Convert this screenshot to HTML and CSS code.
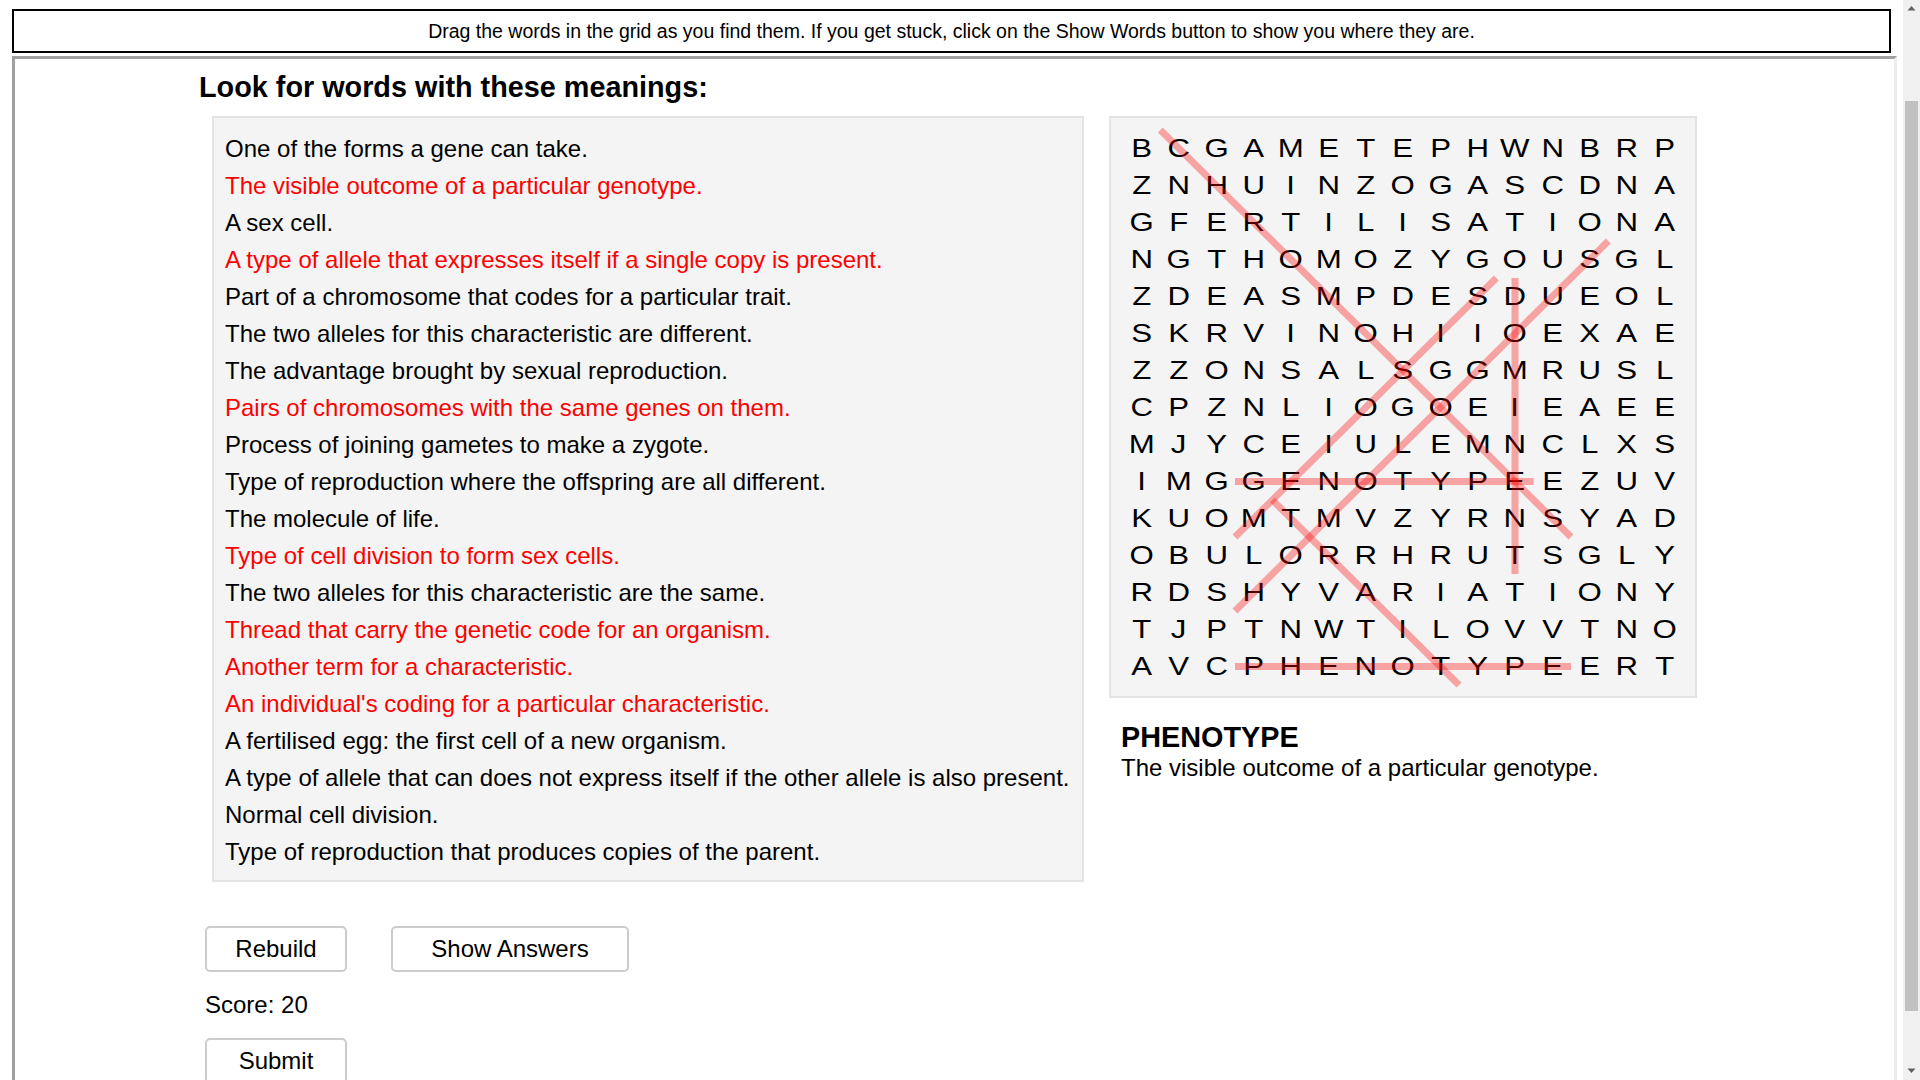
FILE: index.html
```html
<!DOCTYPE html>
<html lang="en">
<head>
<meta charset="utf-8">
<title>Word Search</title>
<link rel="stylesheet" href="styles.css">
</head>
<body>
<div class="page">
  <div class="topbar">Drag the words in the grid as you find them. If you get stuck, click on the Show Words button to show you where they are.</div>
  <div class="frame">
    <div class="wrap">
      <h2 class="title">Look for words with these meanings:</h2>
      <div class="columns">
        <div class="defs">
          <div class="def">One of the forms a gene can take.</div>
          <div class="def found">The visible outcome of a particular genotype.</div>
          <div class="def">A sex cell.</div>
          <div class="def found">A type of allele that expresses itself if a single copy is present.</div>
          <div class="def">Part of a chromosome that codes for a particular trait.</div>
          <div class="def">The two alleles for this characteristic are different.</div>
          <div class="def">The advantage brought by sexual reproduction.</div>
          <div class="def found">Pairs of chromosomes with the same genes on them.</div>
          <div class="def">Process of joining gametes to make a zygote.</div>
          <div class="def">Type of reproduction where the offspring are all different.</div>
          <div class="def">The molecule of life.</div>
          <div class="def found">Type of cell division to form sex cells.</div>
          <div class="def">The two alleles for this characteristic are the same.</div>
          <div class="def found">Thread that carry the genetic code for an organism.</div>
          <div class="def found">Another term for a characteristic.</div>
          <div class="def found">An individual's coding for a particular characteristic.</div>
          <div class="def">A fertilised egg: the first cell of a new organism.</div>
          <div class="def">A type of allele that can does not express itself if the other allele is also present.</div>
          <div class="def">Normal cell division.</div>
          <div class="def">Type of reproduction that produces copies of the parent.</div>
        </div>
        <div class="side">
          <div class="grid-panel">
            <div class="grid-wrap">
              <div class="grid">
                <span>B</span><span>C</span><span>G</span><span>A</span><span>M</span><span>E</span><span>T</span><span>E</span><span>P</span><span>H</span><span>W</span><span>N</span><span>B</span><span>R</span><span>P</span>
                <span>Z</span><span>N</span><span>H</span><span>U</span><span>I</span><span>N</span><span>Z</span><span>O</span><span>G</span><span>A</span><span>S</span><span>C</span><span>D</span><span>N</span><span>A</span>
                <span>G</span><span>F</span><span>E</span><span>R</span><span>T</span><span>I</span><span>L</span><span>I</span><span>S</span><span>A</span><span>T</span><span>I</span><span>O</span><span>N</span><span>A</span>
                <span>N</span><span>G</span><span>T</span><span>H</span><span>O</span><span>M</span><span>O</span><span>Z</span><span>Y</span><span>G</span><span>O</span><span>U</span><span>S</span><span>G</span><span>L</span>
                <span>Z</span><span>D</span><span>E</span><span>A</span><span>S</span><span>M</span><span>P</span><span>D</span><span>E</span><span>S</span><span>D</span><span>U</span><span>E</span><span>O</span><span>L</span>
                <span>S</span><span>K</span><span>R</span><span>V</span><span>I</span><span>N</span><span>O</span><span>H</span><span>I</span><span>I</span><span>O</span><span>E</span><span>X</span><span>A</span><span>E</span>
                <span>Z</span><span>Z</span><span>O</span><span>N</span><span>S</span><span>A</span><span>L</span><span>S</span><span>G</span><span>G</span><span>M</span><span>R</span><span>U</span><span>S</span><span>L</span>
                <span>C</span><span>P</span><span>Z</span><span>N</span><span>L</span><span>I</span><span>O</span><span>G</span><span>O</span><span>E</span><span>I</span><span>E</span><span>A</span><span>E</span><span>E</span>
                <span>M</span><span>J</span><span>Y</span><span>C</span><span>E</span><span>I</span><span>U</span><span>L</span><span>E</span><span>M</span><span>N</span><span>C</span><span>L</span><span>X</span><span>S</span>
                <span>I</span><span>M</span><span>G</span><span>G</span><span>E</span><span>N</span><span>O</span><span>T</span><span>Y</span><span>P</span><span>E</span><span>E</span><span>Z</span><span>U</span><span>V</span>
                <span>K</span><span>U</span><span>O</span><span>M</span><span>T</span><span>M</span><span>V</span><span>Z</span><span>Y</span><span>R</span><span>N</span><span>S</span><span>Y</span><span>A</span><span>D</span>
                <span>O</span><span>B</span><span>U</span><span>L</span><span>O</span><span>R</span><span>R</span><span>H</span><span>R</span><span>U</span><span>T</span><span>S</span><span>G</span><span>L</span><span>Y</span>
                <span>R</span><span>D</span><span>S</span><span>H</span><span>Y</span><span>V</span><span>A</span><span>R</span><span>I</span><span>A</span><span>T</span><span>I</span><span>O</span><span>N</span><span>Y</span>
                <span>T</span><span>J</span><span>P</span><span>T</span><span>N</span><span>W</span><span>T</span><span>I</span><span>L</span><span>O</span><span>V</span><span>V</span><span>T</span><span>N</span><span>O</span>
                <span>A</span><span>V</span><span>C</span><span>P</span><span>H</span><span>E</span><span>N</span><span>O</span><span>T</span><span>Y</span><span>P</span><span>E</span><span>E</span><span>R</span><span>T</span>
              </div>
              <svg class="marks" width="560" height="555" viewBox="0 0 560 555" aria-hidden="true">
                <line x1="112" y1="351.5" x2="410.67" y2="351.5"/>
                <line x1="112" y1="536.5" x2="448" y2="536.5"/>
                <line x1="392" y1="148" x2="392" y2="444"/>
                <line x1="37.33" y1="0" x2="448" y2="407"/>
                <line x1="485.33" y1="111" x2="112" y2="481"/>
                <line x1="373.33" y1="148" x2="112" y2="407"/>
                <line x1="149.33" y1="370" x2="336" y2="555"/>
              </svg>
            </div>
          </div>
          <div class="info">
            <h3 class="info-word">PHENOTYPE</h3>
            <p class="info-text">The visible outcome of a particular genotype.</p>
          </div>
        </div>
      </div>
      <div class="controls">
        <div class="btn-row">
          <button class="btn btn-small" type="button">Rebuild</button>
          <button class="btn btn-wide" type="button">Show Answers</button>
        </div>
        <div class="score">Score: 20</div>
        <button class="btn btn-small submit" type="button">Submit</button>
      </div>
    </div>
  </div>
</div>
<div class="scrollbar">
  <div class="sb-arrow">
    <svg width="17" height="17" viewBox="0 0 17 17"><polygon points="8.5,6 4.5,10.5 12.5,10.5" fill="#606060"/></svg>
  </div>
  <div class="sb-track"><div class="sb-thumb"></div></div>
  <div class="sb-arrow">
    <svg width="17" height="17" viewBox="0 0 17 17"><polygon points="4.5,5.5 12.5,5.5 8.5,10" fill="#606060"/></svg>
  </div>
</div>
</body>
</html>
```
FILE: styles.css
```css
html, body {
  margin: 0;
  padding: 0;
  height: 1080px;
  overflow: hidden;
  background: #ffffff;
}

body {
  display: flex;
  font-family: "Liberation Sans", Arial, sans-serif;
  color: #000;
}

.page {
  flex: 1;
  min-width: 0;
}

.topbar {
  margin: 9px 12px 0 12px;
  height: 44px;
  box-sizing: border-box;
  border: 2px solid #000;
  font-size: 19.5px;
  line-height: 40px;
  text-align: center;
  white-space: nowrap;
}

.frame {
  margin: 3px 6px 0 12px;
  border-style: solid;
  border-width: 3px;
  border-color: #a0a0a0 #ececec #ececec #a0a0a0;
  padding-top: 12px;
  height: 1200px;
  box-sizing: border-box;
}

.wrap {
  width: 1515px;
  margin: 0 auto;
}

.title {
  margin: 0 0 12px 2px;
  font-size: 28.8px;
  line-height: 33px;
  font-weight: bold;
}

.columns {
  display: flex;
  align-items: flex-start;
  gap: 25px;
  margin: 0 15px;
}

.defs {
  width: 872px;
  box-sizing: border-box;
  border: 2px solid #e3e3e3;
  background: #f4f4f4;
  padding: 12px 11px 10px 11px;
}

.def {
  font-size: 24px;
  line-height: 37px;
  white-space: nowrap;
}

.def.found {
  color: #ff0000;
}

.side {
  width: 588px;
}

.grid-panel {
  box-sizing: border-box;
  width: 588px;
  border: 2px solid #e3e3e3;
  background: #f4f4f4;
  padding: 12px 12px 11px 12px;
}

.grid-wrap {
  position: relative;
  width: 560px;
  height: 555px;
}

.grid {
  display: grid;
  grid-template-columns: repeat(15, 1fr);
  grid-auto-rows: 37px;
  width: 560px;
}

.grid span {
  display: block;
  text-align: center;
  font-size: 26px;
  line-height: 37px;
  transform: scaleX(1.2);
}

.marks {
  position: absolute;
  left: 0;
  top: 0;
  overflow: visible;
  pointer-events: none;
}

.marks line {
  stroke: rgba(255, 0, 0, 0.33);
  stroke-width: 7;
  stroke-linecap: butt;
}

.info {
  padding: 23px 12px 0 12px;
}

.info-word {
  margin: 0;
  font-size: 28.8px;
  line-height: 33px;
  font-weight: bold;
}

.info-text {
  margin: 0;
  font-size: 24px;
  line-height: 27.6px;
}

.controls {
  margin-left: 8px;
  padding-top: 44px;
}

.btn-row {
  display: flex;
  gap: 44px;
}

.btn {
  height: 46px;
  box-sizing: border-box;
  border: 2px solid #cccccc;
  border-radius: 5px;
  background: #ffffff;
  font-family: "Liberation Sans", Arial, sans-serif;
  font-size: 24px;
  color: #000;
  padding: 0;
  display: block;
}

.btn-small {
  width: 142px;
}

.btn-wide {
  width: 238px;
}

.score {
  margin-top: 19px;
  font-size: 24px;
  line-height: 28px;
}

.submit {
  margin-top: 19px;
}

.scrollbar {
  width: 17px;
  flex: none;
  height: 1080px;
  background: #f0f0f0;
  display: flex;
  flex-direction: column;
}

.sb-arrow {
  height: 17px;
  flex: none;
}

.sb-arrow svg {
  display: block;
}

.sb-track {
  flex: 1;
}

.sb-thumb {
  margin: 84px 2px 0 2px;
  height: 910px;
  background: #c1c1c1;
}
```
